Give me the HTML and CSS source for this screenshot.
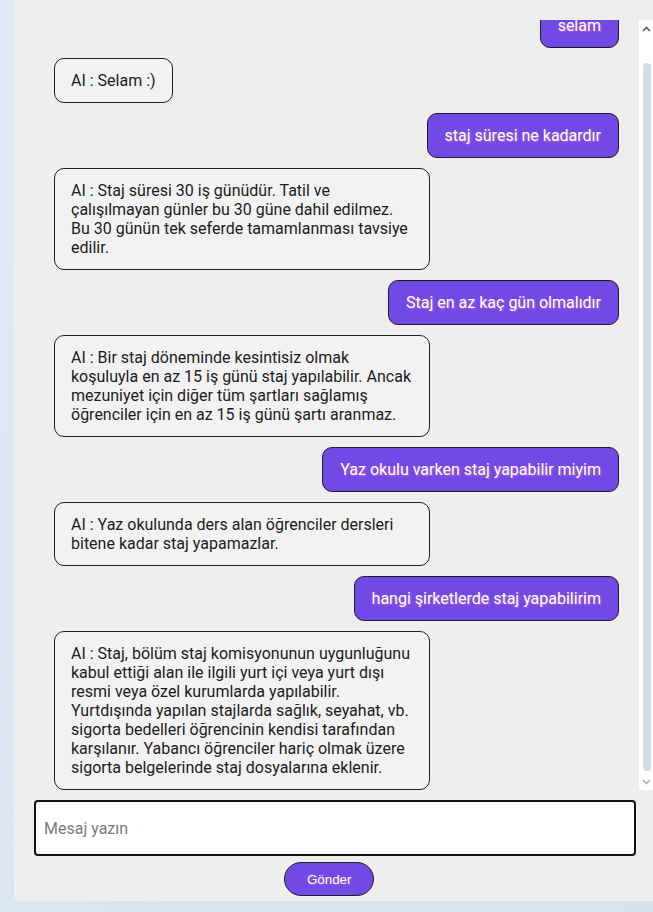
FILE: index.html
```html
<!DOCTYPE html>
<html lang="tr">
<head>
<meta charset="utf-8">
<title>Staj Asistanı</title>
<link rel="stylesheet" href="styles.css">
</head>
<body>
<div class="chat-container">
  <div class="chat-row">
    <div class="messages">
      <div class="messages-inner">
        <div class="msg user">selam</div>
        <div class="msg ai">AI : Selam :)</div>
        <div class="msg user">staj süresi ne kadardır</div>
        <div class="msg ai">AI : Staj süresi 30 iş günüdür. Tatil ve çalışılmayan günler bu 30 güne dahil edilmez. Bu 30 günün tek seferde tamamlanması tavsiye edilir.</div>
        <div class="msg user">Staj en az kaç gün olmalıdır</div>
        <div class="msg ai">AI : Bir staj döneminde kesintisiz olmak koşuluyla en az 15 iş günü staj yapılabilir. Ancak mezuniyet için diğer tüm şartları sağlamış öğrenciler için en az 15 iş günü şartı aranmaz.</div>
        <div class="msg user">Yaz okulu varken staj yapabilir miyim</div>
        <div class="msg ai">AI : Yaz okulunda ders alan öğrenciler dersleri bitene kadar staj yapamazlar.</div>
        <div class="msg user">hangi şirketlerde staj yapabilirim</div>
        <div class="msg ai">AI : Staj, bölüm staj komisyonunun uygunluğunu kabul ettiği alan ile ilgili yurt içi veya yurt dışı resmi veya özel kurumlarda yapılabilir. Yurtdışında yapılan stajlarda sağlık, seyahat, vb. sigorta bedelleri öğrencinin kendisi tarafından karşılanır. Yabancı öğrenciler hariç olmak üzere sigorta belgelerinde staj dosyalarına eklenir.</div>
      </div>
    </div>
    <div class="scrollbar" aria-hidden="true">
      <div class="sb-btn sb-up">
        <svg width="9" height="6" viewBox="0 0 9 6"><path d="M1 5 L4.5 1.5 L8 5" fill="none" stroke="#5a5a5a" stroke-width="1.6"/></svg>
      </div>
      <div class="sb-track"><div class="sb-thumb"></div></div>
      <div class="sb-btn sb-down">
        <svg width="9" height="6" viewBox="0 0 9 6"><path d="M1 1 L4.5 4.5 L8 1" fill="none" stroke="#b5b5b5" stroke-width="1.6"/></svg>
      </div>
    </div>
  </div>
  <form class="composer" onsubmit="return false;">
    <input class="composer-input" type="text" placeholder="Mesaj yazın" autofocus>
    <div class="composer-actions">
      <button class="send-btn" type="submit">Gönder</button>
    </div>
  </form>
</div>
</body>
</html>
```

FILE: styles.css
```css
html, body {
  margin: 0;
  padding: 0;
  height: 100%;
  overflow: hidden;
}

body {
  background: linear-gradient(135deg, #dde9f6 0%, #d9e6f2 60%, #d6e3ef 100%);
  font-family: Roboto, "Noto Sans", Arial, sans-serif;
}

.chat-container {
  margin-left: 14px;
  width: 660px;
  box-sizing: border-box;
  padding: 20px 20px 5px 20px;
  background: #eeeeee;
  border-radius: 0 0 6px 6px;
  display: flex;
  flex-direction: column;
}

.chat-row {
  display: flex;
  width: 620px;
  height: 770px;
}

.messages {
  width: 605px;
  height: 100%;
  overflow-y: scroll;
  scrollbar-width: none;
  display: flex;
  flex-direction: column-reverse;
}

.messages::-webkit-scrollbar {
  display: none;
}

.messages-inner {
  display: flex;
  flex-direction: column;
  gap: 10px;
  padding: 20px 20px 0 20px;
}

.scrollbar {
  width: 15px;
  background: #ffffff;
  display: flex;
  flex-direction: column;
}

.sb-btn {
  height: 17px;
  display: flex;
  align-items: center;
  justify-content: center;
}

.sb-track {
  flex: 1;
  display: flex;
  padding: 26px 0 2px 0;
  justify-content: center;
}

.sb-thumb {
  width: 8px;
  flex: none;
  background: #d1dbe4;
  border-radius: 4px;
}

.msg {
  box-sizing: border-box;
  font-size: 16px;
  line-height: normal;
  padding: 12px 16px;
  border-radius: 10px;
  border: 1px solid #1e1e1e;
  width: fit-content;
}

.msg.ai {
  align-self: flex-start;
  max-width: 376px;
  background: #f2f2f2;
  color: #1c1c1c;
}

.msg.user {
  align-self: flex-end;
  padding: 12px 17px;
  background: #7149e6;
  color: #ffffff;
  text-shadow: 1px 1px 2px rgba(214, 110, 200, 0.8);
}

.composer {
  margin: 10px 0 0 0;
  display: flex;
  flex-direction: column;
  gap: 6px;
}

.composer-input {
  width: 602px;
  height: 56px;
  box-sizing: border-box;
  border: 2px solid #111;
  border-radius: 4px;
  padding: 0 8px;
  font-family: Roboto, "Noto Sans", Arial, sans-serif;
  font-size: 16px;
  background: #fff;
  color: #111;
  outline: none;
}

.composer-input::placeholder {
  color: #7a7a7a;
}

.composer-actions {
  display: flex;
  padding-left: 250px;
}

.send-btn {
  box-sizing: border-box;
  height: 34px;
  padding: 0 22px;
  border: 1px solid #222;
  border-radius: 17px;
  background: #7149e6;
  color: #fff;
  font-family: "Liberation Sans", Arial, sans-serif;
  font-size: 13.33px;
  text-shadow: 1px 1px 2px rgba(214, 110, 200, 0.6);
  cursor: pointer;
}
```
